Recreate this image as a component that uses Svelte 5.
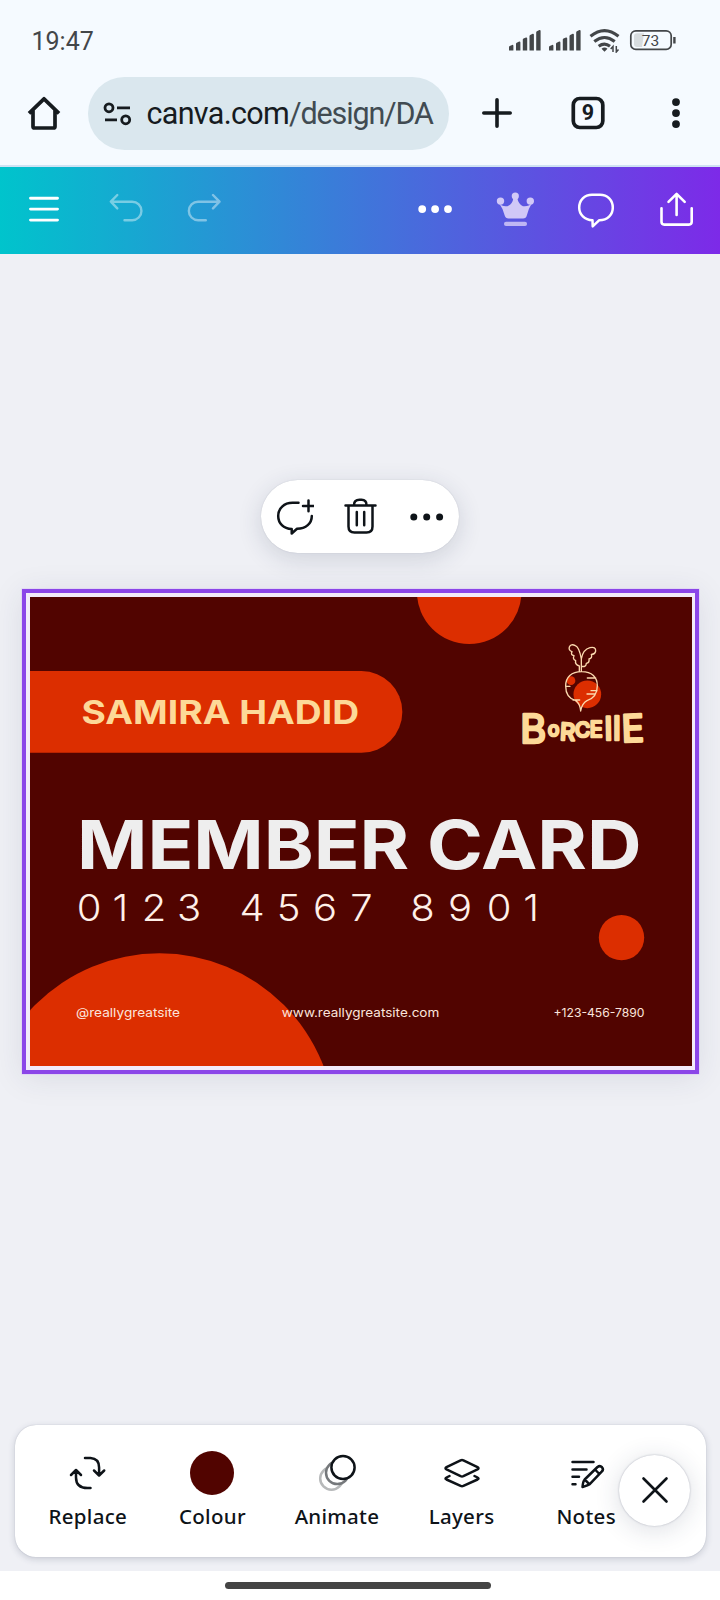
<script>
  const signals = [0, 1];
  const bars = [
    [0, 14.8], [7, 11.5], [13.8, 7.4], [20.5, 3.7], [27.2, 0]
  ];
  const digits = '0123 4567 8901';
  const stretch = 1.08;
  const digitX = [89, 120.5, 154, 189, 220, 252, 288.5, 325, 361.5, 392, 422.5, 460, 499, 531]
    .map((x) => (x / stretch).toFixed(2))
    .join(' ');
</script>

<div class="screen">
  <header class="status">
    <span class="time">19:47</span>
    <div class="indicators">
      {#each signals as s (s)}
        <svg class="signal" width="33" height="22" viewBox="0 0 33 22">
          {#each bars as [x, y]}
            <path d="M{x} {y + 2.2}q0-.7.7-1l2.5-1.1q1.2-.2 1.2 1V20.6h-4.4z" fill="#434649" />
          {/each}
        </svg>
      {/each}
      <svg class="wifi" width="32" height="26" viewBox="589 27 32 26" fill="none" stroke="#434649" stroke-width="3.1">
        <path d="M590.5 36.300Q604.5 25 618.5 36.300M594.300 41.500Q604.5 33.500 614.700 41.500M598.700 46.300Q604.5 42 610 46.300" />
        <path d="M601.500 48.700q3-2.500 6 0l-3 3z" fill="#434649" stroke="none" />
        <path d="M613 52V46.5l-2.3 2.500M616.300 46v6l2.200-2.500" stroke-width="1.500" />
      </svg>
      <svg class="battery" width="47" height="22" viewBox="629 29 47 22">
        <rect x="630.8" y="30.8" width="40.4" height="18.6" rx="5" fill="none" stroke="#434649" stroke-width="1.7" />
        <path d="M637 33.3h7l-2 13.7h-5a3 3 0 0 1-3-3v-7.700a3 3 0 0 1 3-3z" fill="#d7dcdf" />
        <path d="M674.4 37v6.500" stroke="#434649" stroke-width="2.400" />
        <text x="650.500" y="46" font-size="15.500" text-anchor="middle" fill="#434649">73</text>
      </svg>
    </div>
  </header>

  <nav class="browser">
    <svg width="40" height="40" viewBox="24 93 40 40" fill="none" stroke="#161b1f" stroke-width="3.700" stroke-linejoin="round">
      <path d="M29 113.300 44 98.800 59 113.300M33 110v16.500q0 1.500 1.500 1.500h19q1.500 0 1.500-1.500V110" />
    </svg>
    <div class="address">
      <svg width="30" height="26" viewBox="102 100.500 30 26" fill="none" stroke="#161b1f" stroke-width="2.800">
        <circle cx="109" cy="107.300" r="4" /><path d="M117 107.400h13M105 119.300h12" />
        <circle cx="125.700" cy="119.300" r="4" />
      </svg>
      <span class="url"><b>canva.com</b>/design/DA</span>
    </div>
    <svg class="plus" width="40" height="40" viewBox="476.700 93.300 40 40" stroke="#161b1f" stroke-width="3.600" stroke-linecap="round">
      <path d="M483.500 113.300h26.400M496.700 100.100v26.400" />
    </svg>
    <svg class="tabs" width="40" height="40" viewBox="568.200 93.300 40 40">
      <rect x="573.500" y="98.800" width="29.500" height="29" rx="6.500" fill="none" stroke="#161b1f" stroke-width="3.700" />
      <text x="588.200" y="120.800" text-anchor="middle" font-size="21.500" font-weight="700" fill="#161b1f">9</text>
    </svg>
    <svg class="more" width="20" height="40" viewBox="666 93.300 20 40" fill="#161b1f">
      <circle cx="676" cy="102.400" r="3.900" /><circle cx="676" cy="113.400" r="3.900" /><circle cx="676" cy="124.400" r="3.900" />
    </svg>
  </nav>

  <div class="toolbar">
    <svg viewBox="24 188.500 40 40" stroke-width="2.900"><path d="M30.500 197.700h27M30.500 208.600h27M30.500 219.600h27" /></svg>
    <svg class="dim" viewBox="106 188.500 40 40" stroke-width="2.400"><path d="M117.300 194.500 110.800 201.200 117.300 207.900M111 201.200h21.200a9.200 9.200 0 0 1 0 18.500H124.500" /></svg>
    <svg class="dim" viewBox="184 188.500 40 40" stroke-width="2.400"><path d="M213 194.500 219.500 201.200 213 207.900M219.300 201.200h-21.200a9.200 9.200 0 0 0 0 18.500H205.800" /></svg>
    <span></span>
    <svg viewBox="414.500 188.500 40 40"><g fill="#fff" stroke="none"><circle cx="421.700" cy="208.600" r="3.900" /><circle cx="434.600" cy="208.600" r="3.900" /><circle cx="447.500" cy="208.600" r="3.900" /></g></svg>
    <svg viewBox="496 188.500 40 40">
      <g fill="#d1c8f7" stroke="none">
        <path d="M499 202.500Q502 206.500 507.500 205.700Q512.500 204 513.500 197h3.600Q518.500 204 523 205.700Q528.500 206.500 532 202.500Q528.500 208 526.800 215Q526.200 218 523 218H508.500Q505.500 218 504.700 215Q503 208 499 202.500Z" />
        <circle cx="500.500" cy="200.600" r="3.700" /><circle cx="515.300" cy="195.500" r="3.600" /><circle cx="530.300" cy="200.600" r="3.700" />
        <rect x="504" y="221.300" width="23" height="4.200" rx="2" opacity=".85" />
      </g>
    </svg>
    <svg viewBox="576 188.500 40 40" stroke-width="2.500"><path d="M592.500 219.800C584.500 219.500 579.200 214 579.200 207C579.200 199.500 584.500 194.200 592 194.200H600C607.500 194.200 612.800 199.500 612.800 207C612.800 214.500 607.500 219.700 599.300 219.700L592.700 225.800Z" /></svg>
    <svg viewBox="657 188.500 40 40" stroke-width="2.600"><path d="M661.500 207.800v13.500q0 2.800 2.800 2.800h24.600q2.800 0 2.800-2.800V207.800M676.600 214.500V193.700M668.500 201.400l8.100-8 8.100 8" /></svg>
  </div>

  <main>
    <div class="actions">
      <svg viewBox="274 496.500 40 40" stroke-width="2.500"><path d="M298.500 502.200H292.500C284 502.200 278.200 508 278.200 515.500C278.200 522.800 283.500 528.300 291.700 528.600V533L297 528.300C306 528 311.800 523 311.800 515.500M308.500 500v10.800M303 505.400h11" /></svg>
      <svg viewBox="340.500 496.500 40 40" stroke-width="2.500"><path d="M346 505h30M349 505.500V526q0 6 6 6h12q6 0 6-6V505.500M354.500 504.500Q354.500 499.200 360 499.200h2Q367 499.200 367 504.500M357.300 511.500v13.200M364.700 511.500v13.200" /></svg>
      <svg viewBox="406 496.500 40 40"><g fill="#0e1318" stroke="none"><circle cx="413.800" cy="516.500" r="3.500" /><circle cx="426.700" cy="516.500" r="3.500" /><circle cx="439.600" cy="516.500" r="3.500" /></g></svg>
    </div>

    <div class="selection">
      <svg class="card" width="662" height="469" viewBox="30 597 662 469">
        <rect x="29" y="596" width="664" height="471" fill="#510400" />
        <g fill="#dc2e00">
          <circle cx="469.200" cy="591.700" r="52.300" />
          <path d="M29 671H361.500a40.900 40.900 0 0 1 0 81.800H29z" />
          <circle cx="621.500" cy="937.600" r="22.700" />
          <circle cx="159.500" cy="1129" r="175.700" />
        </g>
        <text x="81.500" y="724" font-size="32.600" font-weight="700" fill="#fdd998" textLength="277.500" lengthAdjust="spacingAndGlyphs">SAMIRA HADID</text>
        <text x="77" y="868.800" font-size="67.600" font-weight="700" fill="#eee" textLength="564.500" lengthAdjust="spacingAndGlyphs">MEMBER CARD</text>
        <text transform="scale({stretch} 1)" x={digitX} y="921" font-size="37" font-weight="300" fill="#fff0e9" text-anchor="middle">{digits}</text>
        <g font-size="12.300" fill="#fbe4dc">
          <text x="76" y="1016.700" textLength="104" lengthAdjust="spacingAndGlyphs">@reallygreatsite</text>
          <text x="281.800" y="1016.700" textLength="157.500" lengthAdjust="spacingAndGlyphs">www.reallygreatsite.com</text>
          <text x="553.500" y="1016.700" textLength="91" lengthAdjust="spacingAndGlyphs">+123-456-7890</text>
        </g>
        <g transform="translate(490 620) scale(.33333)">
          <circle cx="292" cy="223" r="41.500" fill="#dc2e00" /><circle cx="243" cy="182" r="13" fill="#dc2e00" />
          <path d="M272 273Q270 250 257 242C236 236 227 218 227 198C227 172 244 155 275 155C306 155 322 172 322 197C322 220 311 235 291 242Q276 250 272 273ZM268 155V138Q254 134 257 122Q247 118 252 107Q241 105 246 95Q235 91 238 81Q243 70 256 77Q268 82 274 117L274 155M274 117Q279 88 300 83Q318 79 317 93Q315 103 304 103Q308 114 297 117Q299 128 289 130Q288 142 275 139M227 199h13M292 174h25M303 212h18M291 222h23M249 240h20" fill="none" stroke="#fbd9ae" stroke-width="4" stroke-linejoin="round" stroke-linecap="round" />
          <text class="brand" fill="#fdd998" stroke="#fdd998"><tspan x="91" y="370" font-size="119">B</tspan><tspan x="174" y="347" font-size="56">o</tspan><tspan x="209" y="359" rotate="3" font-size="70">R</tspan><tspan x="255" y="351" font-size="62">C</tspan><tspan x="299" y="350" font-size="64">E</tspan><tspan x="344" y="360" rotate="-1" font-size="96">l</tspan><tspan x="369" y="361" font-size="96">l</tspan><tspan x="396" y="366" rotate="-2" font-size="112">E</tspan></text>
        </g>
      </svg>
    </div>

    <div class="dock">
      <div class="tool">
        <svg viewBox="65.500 1450.500 44 44" stroke-width="2.500"><path d="M84.500 1457.500H90Q98.600 1458 98.600 1467V1474.500M93.500 1470l5.100 5 5.100-5M90 1487.600H87Q75.500 1487.500 75.500 1477V1470.500M70.500 1474.500l5-5 5 5" /></svg>
        <span>Replace</span>
      </div>
      <div class="tool">
        <svg viewBox="0 0 44 44"><circle cx="22" cy="22" r="22" fill="#510400" stroke="none" /></svg>
        <span>Colour</span>
      </div>
      <div class="tool">
        <svg viewBox="315 1450.500 44 44" stroke-width="2.500"><circle cx="331.500" cy="1478" r="11.300" stroke="#b7b9ba" /><circle cx="337.300" cy="1472.300" r="11.300" fill="#fff" stroke="#75787b" /><circle cx="343" cy="1467" r="11.600" fill="#fff" /></svg>
        <span>Animate</span>
      </div>
      <div class="tool">
        <svg viewBox="440 1450.500 44 44" stroke-width="2.500"><path d="M460.600 1459.900Q462 1459.200 463.400 1459.900L477.500 1466.700Q479.500 1467.800 477.500 1468.900L463.400 1475.600Q462 1476.200 460.600 1475.600L446.500 1468.900Q444.500 1467.800 446.500 1466.700ZM449.500 1475.500 446.500 1477Q444.500 1478 446.500 1479L460.600 1485.400Q462 1486 463.400 1485.400L477.500 1479Q479.500 1478 477.500 1477L474.500 1475.500" /></svg>
        <span>Layers</span>
      </div>
      <div class="tool">
        <svg viewBox="565 1450.500 44 44" stroke-width="2.500"><path d="M573.500 1461.500h21M573.500 1469h14M573.500 1476.300h6.500M573.500 1483.700h3M598.500 1466.500Q601 1464.600 603 1466.700Q605 1469 602.700 1471.200L590.500 1483.800Q589.500 1484.700 583.500 1486.500Q584 1480.800 585.700 1479ZM596 1469l4.400 4.500M585.700 1479l4.600 4.600" /></svg>
        <span>Notes</span>
      </div>
      <button class="close" aria-label="Close">
        <svg width="30" height="30" viewBox="0 0 30 30" stroke-width="2.600"><path d="M3.500 3.500 26.500 26.500M26.500 3.500 3.500 26.500" /></svg>
      </button>
    </div>
  </main>
  <footer><i></i></footer>
</div>

<style>
  :global(body) { margin: 0; }
  .screen {
    width: 720px; height: 1600px; display: flex; flex-direction: column; overflow: hidden;
    background: #eff0f5; font-family: Roboto, "Noto Sans", sans-serif;
  }
  svg { display: block; flex: none; }
  .status {
    height: 77px; box-sizing: border-box; padding: 27px 44px 0 31.500px; display: flex;
    justify-content: space-between; align-items: flex-start; background: #f5faff;
  }
  .time { font-size: 25px; line-height: 30px; color: #434649; }
  .indicators { display: flex; align-items: flex-start; }
  .signal { margin: 3px 7px 0 0; }
  .wifi { margin-right: 8px; }
  .battery { margin-top: 2px; }
  .browser {
    height: 90px; box-sizing: border-box; padding-left: 24px; display: flex; align-items: flex-start;
    background: #f5faff; border-bottom: 2px solid #cfe2f3;
  }
  .browser > svg { margin-top: 16px; }
  .address {
    width: 361px; height: 73px; box-sizing: border-box; margin-left: 24px; padding-left: 14px;
    display: flex; align-items: center; border-radius: 37px; background: #dae7ee;
  }
  .url { margin-left: 14.500px; font-size: 30.500px; white-space: nowrap; color: #414b52; letter-spacing: -1.150px; }
  .url b { font-weight: 400; color: #161b1f; letter-spacing: -.680px; }
  .plus { margin-left: 27.700px; }
  .tabs { margin-left: 51.500px; }
  .more { margin-left: 57.800px; }
  .toolbar {
    height: 87px; box-sizing: border-box; padding-bottom: 4px; display: grid;
    grid-template-columns: 88px 76px 80px 150px 81px 81px 80px 81px;
    align-items: center; justify-items: center; background: linear-gradient(90deg, #00c4cc, #7d2ae8);
  }
  .toolbar svg, .actions svg {
    width: 40px; height: 40px; fill: none; stroke: #fff; stroke-linecap: round; stroke-linejoin: round;
  }
  .toolbar .dim { opacity: .42; }
  main { flex: 1; display: flex; flex-direction: column; align-items: center; }
  .actions {
    width: 198px; height: 73px; margin-top: 226px; display: flex; align-items: center;
    justify-content: center; gap: 26px; border-radius: 37px; background: #fff;
    box-shadow: 0 0 1px rgba(40, 45, 70, .25), 0 6px 24px rgba(40, 50, 80, .16);
  }
  .actions svg { stroke: #0e1318; }
  .selection {
    margin: 36px 0 0 1px; padding: 4px 3.500px; border: 4px solid #8b46e8; background: #f2ebfa;
    box-shadow: 0 0 0 .5px #d9c7f5, 0 4px 30px rgba(40, 50, 80, .1);
  }
  .card { font-family: Inter, sans-serif; }
  .brand { font-weight: 400; stroke-width: 8; stroke-linejoin: round; }
  .dock {
    width: 691px; height: 132px; box-sizing: border-box; margin: auto 0 14px; padding-left: 11px;
    position: relative; display: flex; border-radius: 21px; background: #fff;
    box-shadow: 0 0 1px rgba(40, 50, 80, .3), 0 2px 7px rgba(40, 50, 80, .2);
  }
  .tool { width: 124.600px; padding-top: 26px; display: flex; flex-direction: column; align-items: center; }
  .tool svg { width: 44px; height: 44px; }
  .tool svg, .close svg { fill: none; stroke: #0e1318; stroke-linecap: round; stroke-linejoin: round; }
  .tool span {
    margin-top: 7px; font: 500 20.500px/28px "Noto Sans", sans-serif; letter-spacing: .3px; color: #0e1318;
  }
  .close {
    position: absolute; right: 15.500px; top: 30px; width: 71px; height: 71px; padding: 0; border: 0;
    border-radius: 50%; display: grid; place-items: center; background: #fff;
    box-shadow: 0 0 2px rgba(40, 50, 80, .35), 0 4px 26px rgba(40, 50, 80, .16);
  }
  footer { height: 29.500px; display: flex; justify-content: center; background: #fff; }
  footer i { width: 266px; height: 7px; margin: 11.500px 4px 0 0; border-radius: 4px; background: #444; }
</style>
